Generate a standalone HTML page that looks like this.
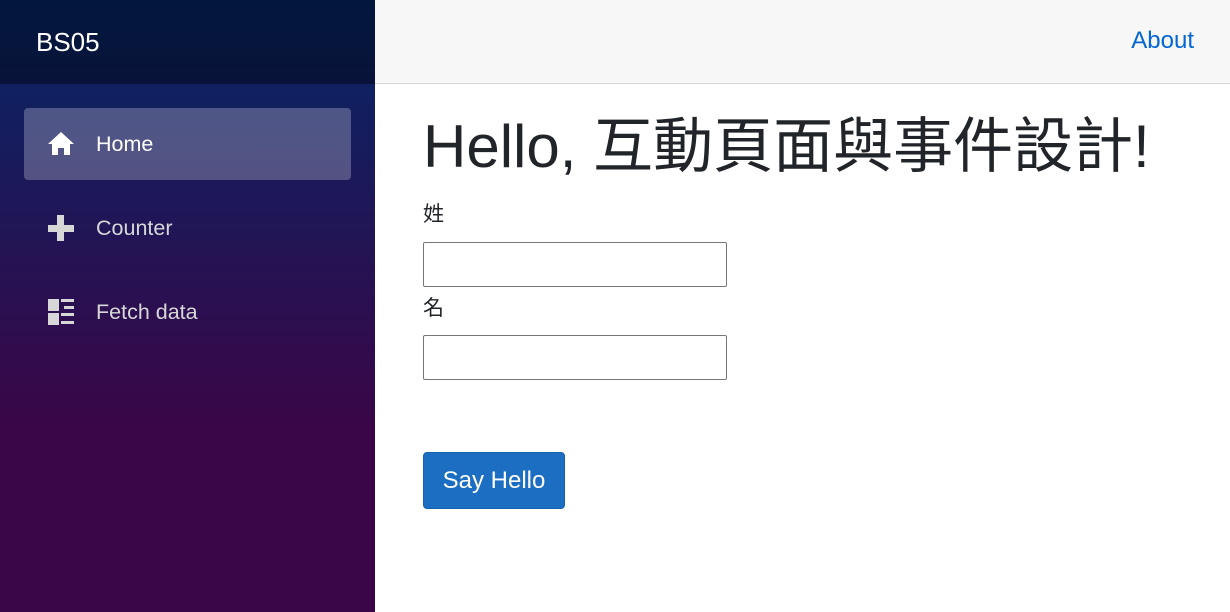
<!DOCTYPE html>
<html><head><meta charset="utf-8"><style>
*{box-sizing:border-box;margin:0;padding:0}
body{width:1230px;height:612px;overflow:hidden;font-family:"Liberation Sans","Noto Sans CJK TC",sans-serif;background:#fff;position:relative}
.side{position:absolute;left:0;top:0;width:375px;height:612px;background:linear-gradient(180deg,rgb(5,39,103) 0%,#3a0647 70%)}
.brand{height:84px;background:rgba(0,0,0,0.4);color:#fff;font-size:26px;line-height:84px;padding-left:36px}
.nav{position:absolute;left:24px;width:327px;height:72px;border-radius:4px;color:#d7d7d7;font-size:21.5px;line-height:72px;padding-left:72px}
.nav.act{background:rgba(255,255,255,0.25);color:#fff}
.nav svg{position:absolute;left:23px;top:23px}
.top{position:absolute;left:375px;top:0;right:0;height:84px;background:#f7f7f7;border-bottom:1px solid #d6d5d5}
.top a{position:absolute;right:36px;top:27px;font-size:24px;color:#0366d6;text-decoration:none}
h1{position:absolute;left:423px;top:110px;font-size:60px;font-weight:400;color:#212529;white-space:nowrap;line-height:74px}
.lbl{position:absolute;left:423px;font-size:21px;color:#212529}
.inp{position:absolute;left:423px;width:304px;height:45px;border:1px solid #767676;border-radius:2px}
.btn{position:absolute;left:423px;top:452px;width:142px;height:57px;background:#1b6ec2;border:1px solid #1861ac;border-radius:4px;color:#fff;font-size:24px;line-height:55px;text-align:center}
</style></head><body>
<div class="side">
<div class="brand">BS05</div>
<div class="nav act" style="top:108px"><svg width="28" height="26" viewBox="0 0 28 26"><path d="M14 1 L27 13 L23 13 L23 24 L17 24 L17 17 L11 17 L11 24 L5 24 L5 13 L1 13 Z" fill="#fff"/></svg>Home</div>
<div class="nav" style="top:192px"><svg width="28" height="26" viewBox="0 0 28 26"><path d="M10 0h7v10h10v7H17v9h-7v-9H1v-7h9z" fill="#d7d7d7"/></svg>Counter</div>
<div class="nav" style="top:276px"><svg width="28" height="26" viewBox="0 0 28 26"><g fill="#d7d7d7"><rect x="1" y="0" width="11" height="12"/><rect x="1" y="14" width="11" height="12"/><rect x="14" y="0" width="13" height="3"/><rect x="17" y="7" width="10" height="3"/><rect x="14" y="14" width="13" height="3"/><rect x="14" y="22" width="13" height="3"/></g></svg>Fetch data</div>
</div>
<div class="top"><a>About</a></div>
<h1>Hello, 互動頁面與事件設計!</h1>
<div class="lbl" style="top:198px">姓</div>
<div class="inp" style="top:242px"></div>
<div class="lbl" style="top:292px">名</div>
<div class="inp" style="top:335px"></div>
<div class="btn">Say Hello</div>
</body></html>
